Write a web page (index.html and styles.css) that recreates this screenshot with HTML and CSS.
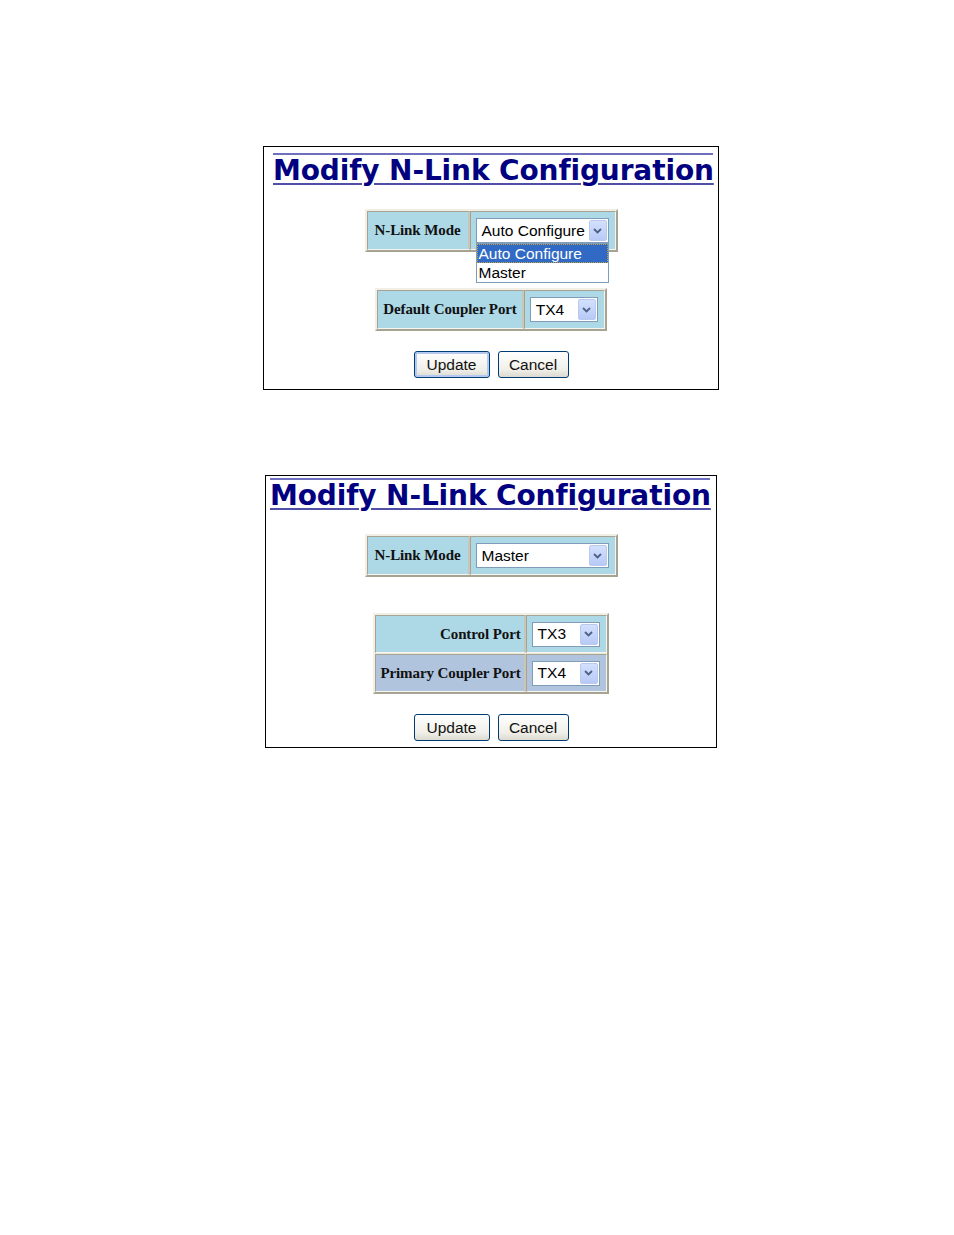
FILE: index.html
```html
<!DOCTYPE html>
<html>
<head>
<meta charset="utf-8">
<link rel="stylesheet" href="styles.css">
</head>
<body>
<div class="page">
  <div class="shot shot-one">
    <div class="title-wrap"><span class="title">Modify N-Link Configuration</span></div>
    <div class="tables">
      <div class="ptable">
        <div class="plabel">N-Link Mode</div>
        <div class="pfield">
          <div class="select sel-mode">
            <span class="sel-text">Auto Configure</span>
            <span class="sel-btn"><svg width="9" height="6" viewBox="0 0 9 6"><path d="M1 1 L4.5 4.5 L8 1" fill="none" stroke="#4d6185" stroke-width="1.8"/></svg></span>
            <div class="droplist">
              <div class="opt opt-active">Auto Configure</div>
              <div class="opt">Master</div>
            </div>
          </div>
        </div>
      </div>
      <div class="ptable">
        <div class="plabel plabel-default">Default Coupler Port</div>
        <div class="pfield">
          <div class="select sel-port">
            <span class="sel-text">TX4</span>
            <span class="sel-btn"><svg width="9" height="6" viewBox="0 0 9 6"><path d="M1 1 L4.5 4.5 L8 1" fill="none" stroke="#4d6185" stroke-width="1.8"/></svg></span>
          </div>
        </div>
      </div>
    </div>
    <div class="buttons">
      <span class="btn btn-update btn-focus">Update</span>
      <span class="btn btn-cancel">Cancel</span>
    </div>
  </div>

  <div class="shot shot-two">
    <div class="title-wrap"><span class="title">Modify N-Link Configuration</span></div>
    <div class="tables">
      <div class="ptable">
        <div class="plabel">N-Link Mode</div>
        <div class="pfield">
          <div class="select sel-mode">
            <span class="sel-text">Master</span>
            <span class="sel-btn"><svg width="9" height="6" viewBox="0 0 9 6"><path d="M1 1 L4.5 4.5 L8 1" fill="none" stroke="#4d6185" stroke-width="1.8"/></svg></span>
          </div>
        </div>
      </div>
      <div class="ptable ptable-multi">
        <div class="plabel plabel-wide plabel-right">Control Port</div>
        <div class="pfield">
          <div class="select sel-port">
            <span class="sel-text">TX3</span>
            <span class="sel-btn"><svg width="9" height="6" viewBox="0 0 9 6"><path d="M1 1 L4.5 4.5 L8 1" fill="none" stroke="#4d6185" stroke-width="1.8"/></svg></span>
          </div>
        </div>
        <div class="plabel plabel-wide plabel-right cell-alt">Primary Coupler Port</div>
        <div class="pfield cell-alt">
          <div class="select sel-port">
            <span class="sel-text">TX4</span>
            <span class="sel-btn"><svg width="9" height="6" viewBox="0 0 9 6"><path d="M1 1 L4.5 4.5 L8 1" fill="none" stroke="#4d6185" stroke-width="1.8"/></svg></span>
          </div>
        </div>
      </div>
    </div>
    <div class="buttons">
      <span class="btn btn-update">Update</span>
      <span class="btn btn-cancel">Cancel</span>
    </div>
  </div>
</div>
</body>
</html>
```
FILE: styles.css
```css
* { box-sizing: border-box; }
html, body { margin: 0; padding: 0; background: #fff; }
body { font-family: "Liberation Sans", Arial, sans-serif; }

.page {
  padding-top: 146px;
  display: flex;
  flex-direction: column;
}

.shot {
  border: 1px solid #000;
  background: #fff;
  display: flex;
  flex-direction: column;
  align-items: center;
}
.shot-one {
  margin-left: 263px;
  width: 456px;
  padding: 6px 0 11px;
}
.shot-two {
  margin-left: 265px;
  width: 452px;
  margin-top: 85px;
  padding: 2px 0 6px;
}

.title-wrap {
  border-top: 2px solid #6f6fbf;
  height: 56px;
  align-self: stretch;
  text-align: center;
  white-space: nowrap;
}
.shot-one .title-wrap { margin: 0 5px 0 9px; }
.shot-two .title-wrap { margin: 0 6px 0 4px; }

.title {
  display: inline-block;
  font-family: "DejaVu Sans", Verdana, sans-serif;
  font-weight: bold;
  font-size: 28px;
  line-height: 30px;
  padding-top: 1px;
  color: #000080;
  text-decoration: underline;
  text-decoration-color: #5050a8;
  text-decoration-thickness: 2px;
  text-underline-offset: 3px;
  letter-spacing: -0.12px;
  white-space: nowrap;
}

.tables {
  display: flex;
  flex-direction: column;
  align-items: center;
  gap: 36px;
}

.ptable {
  display: grid;
  grid-template-columns: auto auto;
  grid-auto-rows: 39px;
  row-gap: 1px;
  border: 2px solid;
  border-color: #f1efe5 #a6a393 #a6a393 #f1efe5;
  background: #ece9d8;
}
.ptable-multi { grid-auto-rows: 38px; }

.plabel, .pfield {
  display: flex;
  align-items: center;
  background: #add8e6;
  border: 1px solid;
  border-color: #a6a393 #f5f4ee #f5f4ee #a6a393;
}
.cell-alt { background: #b0c4de; }

.plabel {
  padding: 0 7px 0 7px;
  border-right: 2px solid #c9c6b6;
  font-family: "Liberation Serif", "Times New Roman", serif;
  font-weight: bold;
  font-size: 15px;
  color: #111;
  letter-spacing: -0.1px;
  white-space: nowrap;
}
.plabel-wide { padding: 0 3px 0 4px; }
.plabel-default { padding: 0 5px 0 5px; }
.plabel-right { justify-content: flex-end; }

.pfield {
  padding: 0 6px 0 5px;
}

.select {
  position: relative;
  display: flex;
  align-items: center;
  height: 25px;
  border: 1px solid #7f9db9;
  background: #fff;
  font-family: "Liberation Sans", Arial, sans-serif;
  font-size: 15.5px;
  color: #000;
}
.sel-mode { width: 133px; }
.sel-port { width: 68px; }

.sel-text {
  flex: 1;
  padding-left: 5px;
  white-space: nowrap;
}
.sel-btn {
  width: 18px;
  height: 21px;
  margin-right: 1px;
  display: flex;
  align-items: center;
  justify-content: center;
  background: linear-gradient(#d3e0fd, #b7caf7);
  border: 1px solid #b9c9ef;
  border-radius: 2px;
}

.droplist {
  position: absolute;
  left: -1px;
  top: 24px;
  width: 133px;
  border: 1px solid #7f9db9;
  background: #fff;
  z-index: 2;
}
.opt {
  height: 19px;
  line-height: 19px;
  padding-left: 2px;
  font-size: 15.5px;
  white-space: nowrap;
}
.opt-active {
  background: #316ac5;
  color: #fff;
  outline: 1px dotted #c8a040;
  outline-offset: -1px;
}

.buttons {
  display: flex;
  gap: 8px;
  margin-top: 20px;
}
.btn {
  display: flex;
  align-items: center;
  justify-content: center;
  height: 27px;
  border: 1px solid #003c74;
  border-radius: 3px;
  background: linear-gradient(#ffffff, #f0efe9 70%, #dcdad0);
  font-family: "Liberation Sans", Arial, sans-serif;
  font-size: 15.5px;
  color: #111;
}
.btn-update { width: 76px; }
.btn-cancel { width: 71px; }
.btn-focus { box-shadow: inset 0 0 0 2px #b3c9ef; }
```
